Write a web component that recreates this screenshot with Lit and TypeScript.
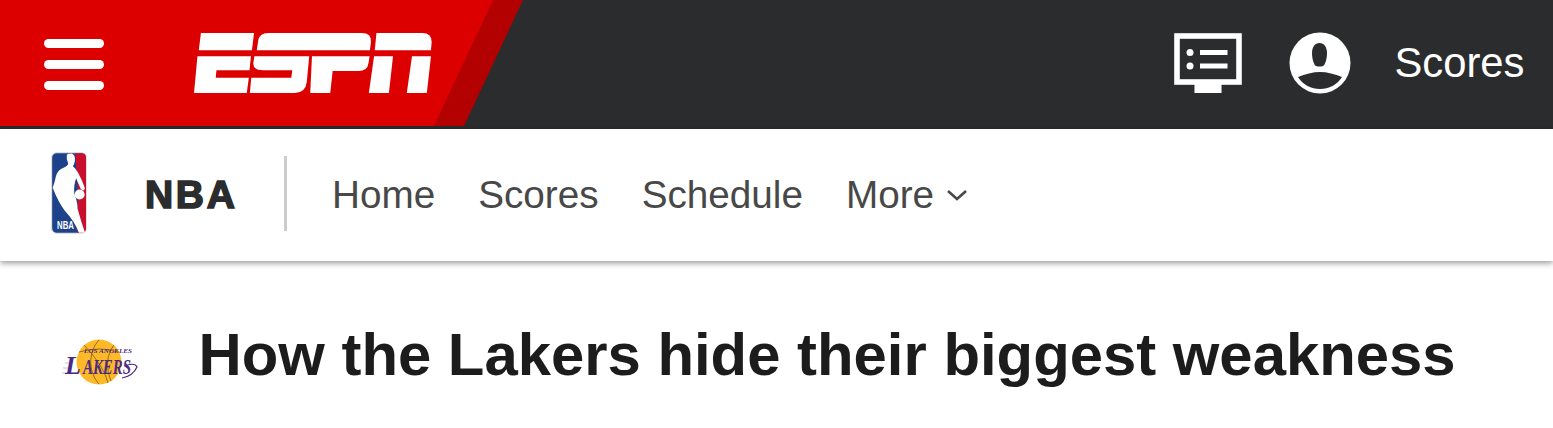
import { LitElement, html, css, svg } from "lit";
import { customElement } from "lit/decorators.js";

const espn = svg`
<path d="M583 98H737L731 150H577Z"/>
<path d="M573 168H728L724 210H628L626 232H722L716 278H563Z"/>
<path d="M745 150L749 122Q752 98 778 98H1050Q1078 98 1076 125L1073 150Z"/>
<path d="M1092 98H1225Q1252 98 1252 125L1250 150H1087Z"/>
<path d="M738 168H897L890 245Q886 278 855 278H725L729 232H845L848 210H765Q733 210 735 188Z"/>
<path d="M905 168H1072L1069 188Q1066 212 1040 212H965L958 278H900Z"/>
<path d="M1085 168H1140L1128 278H1070Z"/>
<path d="M1195 168H1250L1238 278H1180Z"/>`;

@customElement("app-root")
export class AppRoot extends LitElement {
  static styles = css`
    :host { display: block; font-family: "Liberation Sans", Arial, sans-serif; background: #fff; height: 428px; overflow: hidden; }
    .top { display: flex; align-items: center; height: 126px; background: #2b2c2d; border-bottom: 3px solid #2b2c2d; }
    .brand { position: relative; display: flex; align-items: center; width: 523px; height: 126px; flex: none; background: #b30000; clip-path: polygon(0 0, 523px 0, 464px 126px, 0 126px); }
    .brand::before { content: ""; position: absolute; inset: 0; background: #dc0000; clip-path: polygon(0 0, 493px 0, 434px 126px, 0 126px); }
    .burger { position: relative; display: flex; flex-direction: column; gap: 12px; margin: 2px 0 0 44px; width: 60px; }
    .burger i { display: block; height: 9px; border-radius: 5px; background: #fff; }
    .logo { position: relative; display: block; margin-left: 90px; width: 238px; height: 60px; fill: #fff; }
    .actions { display: flex; align-items: center; margin-left: auto; padding-right: 28.5px; color: #fff; }
    .tv { width: 68px; height: 60px; display: block; }
    .person { width: 62px; height: 62px; display: block; margin-left: 47px; }
    .label { font-size: 41.8px; margin-left: 43.5px; line-height: 1; }
    .nav { position: relative; display: flex; align-items: center; height: 132px; padding-left: 51px; background: #fff; box-shadow: 0 2px 6px rgba(0,0,0,.42); }
    .nba { width: 36px; height: 82px; display: block; flex: none; margin-top: -4px; }
    .nba-name { margin-left: 58px; font-size: 39px; font-weight: 700; color: #2b2c2d; -webkit-text-stroke: 1.6px #2b2c2d; letter-spacing: 2.7px; width: 91px; white-space: nowrap; }
    .divider { width: 3px; height: 75px; margin: -4px 0 0 48px; background: #ccc; }
    .links { display: flex; align-items: center; gap: 43px; margin-left: 45px; font-size: 38.7px; color: #484848; }
    .more { display: flex; align-items: center; gap: 12px; }
    .chev { width: 22px; height: 14px; display: block; }
    .story { display: flex; align-items: center; height: 187px; padding-left: 60px; }
    .team { width: 78px; height: 52px; display: block; flex: none; margin-top: 15px; }
    h1 { margin: 0 0 0 60.5px; font-size: 59.85px; font-weight: 700; color: #1c1c1c; white-space: nowrap; line-height: 1; }
  `;

  render() {
    return html`
      <header class="top">
        <div class="brand">
          <div class="burger"><i></i><i></i><i></i></div>
          <svg class="logo" viewBox="563 98 690 180" preserveAspectRatio="none">${espn}</svg>
        </div>
        <div class="actions">
          <svg class="tv" viewBox="0 0 68 60">
            <rect x="3" y="3" width="62" height="46" fill="none" stroke="#fff" stroke-width="5.6"/>
            <rect x="20.5" y="51" width="27" height="9" fill="#fff"/>
            <circle cx="16" cy="19.5" r="3.5" fill="#fff"/>
            <circle cx="16" cy="33" r="3.5" fill="#fff"/>
            <rect x="26" y="17" width="27.5" height="5" fill="#fff"/>
            <rect x="26" y="30.5" width="27.5" height="5" fill="#fff"/>
          </svg>
          <svg class="person" viewBox="0 0 62 62">
            <circle cx="31" cy="31" r="30.5" fill="#fff"/>
            <path d="M30.5 11C26 11 23 15 23 21C23 27 25 33 27 34Q30.5 35 34 34C36 33 38 27 38 21C38 15 35 11 30.5 11Z" fill="#2b2c2d"/>
            <path d="M9 45C16 42 24 40 31 40C38 40 46 42 53 45C48 53 40 57 31 57C22 57 14 53 9 45Z" fill="#2b2c2d"/>
          </svg>
          <span class="label">Scores</span>
        </div>
      </header>
      <nav class="nav">
        <svg class="nba" viewBox="33 22 107 243">
          <rect x="35" y="24" width="103" height="239" rx="14" fill="#1d428a" stroke="#e4e4e4" stroke-width="3"/>
          <path d="M105 25H124Q137 25 137 38V248Q137 262 124 262H112V120Z" fill="#c8102e"/>
          <path d="M80 30Q84 26 94 26Q106 30 104 48Q102 60 98 64Q108 72 114 84Q126 106 134 130L130 136L122 132Q112 112 108 100Q100 118 102 146Q112 170 112 190Q122 226 134 262H116Q104 228 74 196Q54 170 38 128Q44 112 48 92Q54 74 72 68Q84 62 84 56Q78 44 80 30Z" fill="#fff"/>
          <circle cx="118" cy="148" r="15" fill="#fff"/>
          <text x="51" y="250" font-size="34" font-weight="700" fill="#fff" textLength="50" lengthAdjust="spacingAndGlyphs" font-family="Liberation Sans">NBA</text>
        </svg>
        <span class="nba-name">NBA</span>
        <span class="divider"></span>
        <div class="links">
          <span>Home</span><span>Scores</span><span>Schedule</span>
          <span class="more">More
            <svg class="chev" viewBox="0 0 22 14"><path d="M2 3L11 11L20 3" fill="none" stroke="#484848" stroke-width="2.6"/></svg>
          </span>
        </div>
      </nav>
      <section class="story">
        <svg class="team" viewBox="0 0 78 52">
          <circle cx="39" cy="26" r="22.5" fill="#fdb927"/>
          <path d="M39 4C28 16 28 36 39 48M24 9C34 20 44 32 48 47M54 9C46 20 46 32 51 45M19 16Q40 10 59 16" fill="none" stroke="#6b4a12" stroke-width=".7"/>
          <path d="M2 37H8M3 32H10M5 27H12" stroke="#c9bfe0" stroke-width="1.2"/>
          <path d="M64 30Q75 26 77 31Q73 40 62 42" fill="none" stroke="#552583" stroke-width="1.2"/>
          <text x="24" y="16.8" font-size="7" font-weight="700" font-style="italic" fill="#4b2a85" textLength="48" lengthAdjust="spacingAndGlyphs" font-family="Liberation Serif">LOS ANGELES</text>
          <text x="5" y="38" font-size="26" font-weight="700" font-style="italic" fill="#4b2a85" font-family="Liberation Serif">L</text>
          <text x="23" y="38" font-size="21" font-weight="700" font-style="italic" fill="#4b2a85" textLength="48" lengthAdjust="spacingAndGlyphs" font-family="Liberation Serif">AKERS</text>
        </svg>
        <h1>How the Lakers hide their biggest weakness</h1>
      </section>
    `;
  }
}
